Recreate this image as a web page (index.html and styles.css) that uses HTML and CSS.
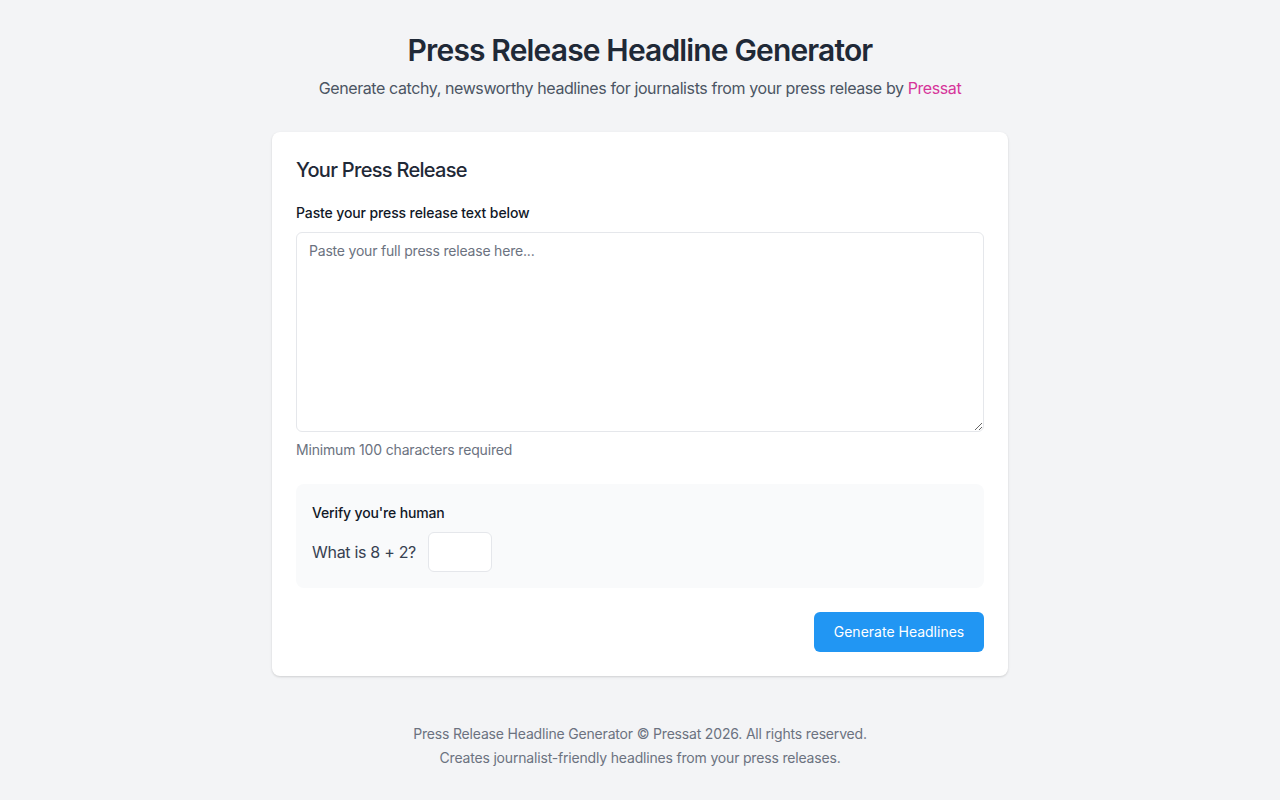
FILE: index.html
```html
<!DOCTYPE html>
<html lang="en">
<head>
<meta charset="utf-8">
<title>Press Release Headline Generator</title>
<link rel="stylesheet" href="styles.css">
</head>
<body>
<div class="page">
  <header class="hero">
    <h1 class="hero-title">Press Release Headline Generator</h1>
    <p class="hero-sub">Generate catchy, newsworthy headlines for journalists from your press release by <a class="brand-link" href="#">Pressat</a></p>
  </header>
  <main class="card">
    <h2 class="card-title">Your Press Release</h2>
    <label class="field-label" for="pr">Paste your press release text below</label>
    <textarea id="pr" class="pr-text" placeholder="Paste your full press release here..."></textarea>
    <p class="hint">Minimum 100 characters required</p>
    <div class="verify">
      <div class="verify-label">Verify you're human</div>
      <div class="verify-row">
        <span class="verify-q">What is 8 + 2?</span>
        <input class="verify-input" type="text">
      </div>
    </div>
    <div class="actions">
      <button class="btn-primary" type="button">Generate Headlines</button>
    </div>
  </main>
  <footer class="footer">
    <p class="footer-line">Press Release Headline Generator © Pressat 2026. All rights reserved.</p>
    <p class="footer-line">Creates journalist-friendly headlines from your press releases.</p>
  </footer>
</div>
</body>
</html>
```
FILE: styles.css
```css
* { box-sizing: border-box; }
html, body { margin: 0; padding: 0; }
body {
  background: #f3f4f6;
  font-family: Inter, "Noto Sans", sans-serif;
  color: #1f2937;
}
.page {
  width: 736px;
  margin: 0 auto;
  padding-top: 32px;
}
.hero { text-align: center; }
.hero-title {
  margin: 0;
  font-size: 30px;
  line-height: 36px;
  font-weight: 600;
  letter-spacing: -0.85px;
  color: #1f2937;
}
.hero-sub {
  margin: 8px 0 0;
  font-size: 16px;
  line-height: 24px;
  letter-spacing: -0.4px;
  color: #4b5563;
}
.brand-link { color: #d6359a; text-decoration: none; }
.card {
  margin-top: 32px;
  background: #fff;
  border-radius: 8px;
  box-shadow: 0 1px 3px rgba(0,0,0,0.1), 0 1px 2px rgba(0,0,0,0.06);
  padding: 24px;
}
.card-title {
  margin: 0;
  font-size: 20px;
  line-height: 28px;
  font-weight: 500;
  letter-spacing: -0.7px;
  color: #1f2937;
}
.field-label {
  display: block;
  margin-top: 19px;
  font-size: 14px;
  line-height: 20px;
  font-weight: 500;
  letter-spacing: -0.12px;
  color: #111827;
}
.pr-text {
  display: block;
  width: 100%;
  height: 200px;
  margin-top: 9px;
  padding: 8px 12px;
  border: 1px solid #e5e7eb;
  border-radius: 6px;
  font-family: inherit;
  font-size: 14px;
  line-height: 20px;
  letter-spacing: -0.2px;
  color: #1f2937;
  resize: vertical;
  outline: none;
}
.pr-text::placeholder { color: #6b7280; }
.hint {
  margin: 8px 0 0;
  font-size: 14px;
  line-height: 20px;
  letter-spacing: -0.17px;
  color: #6b7280;
}
.verify {
  margin-top: 24px;
  background: #f9fafb;
  border-radius: 8px;
  padding: 19px 16px 16px;
}
.verify-label {
  font-size: 14px;
  line-height: 20px;
  font-weight: 500;
  letter-spacing: -0.15px;
  color: #111827;
}
.verify-row {
  margin-top: 9px;
  display: flex;
  align-items: center;
  gap: 12px;
}
.verify-q {
  font-size: 16px;
  line-height: 24px;
  letter-spacing: -0.3px;
  color: #374151;
}
.verify-input {
  width: 64px;
  height: 40px;
  border: 1px solid #e5e7eb;
  border-radius: 6px;
  background: #fff;
  font-family: inherit;
  font-size: 16px;
  outline: none;
}
.actions {
  margin-top: 24px;
  display: flex;
  justify-content: flex-end;
}
.btn-primary {
  height: 40px;
  width: 170px;
  padding: 0 0 1px;
  border: none;
  border-radius: 6px;
  background: #2196f3;
  color: #fff;
  font-family: inherit;
  font-size: 14px;
  line-height: 20px;
  font-weight: 400;
  cursor: pointer;
}
.footer {
  margin-top: 46px;
  text-align: center;
}
.footer-line {
  margin: 0;
  font-size: 14px;
  line-height: 24px;
  letter-spacing: -0.18px;
  color: #6b7280;
}
```
